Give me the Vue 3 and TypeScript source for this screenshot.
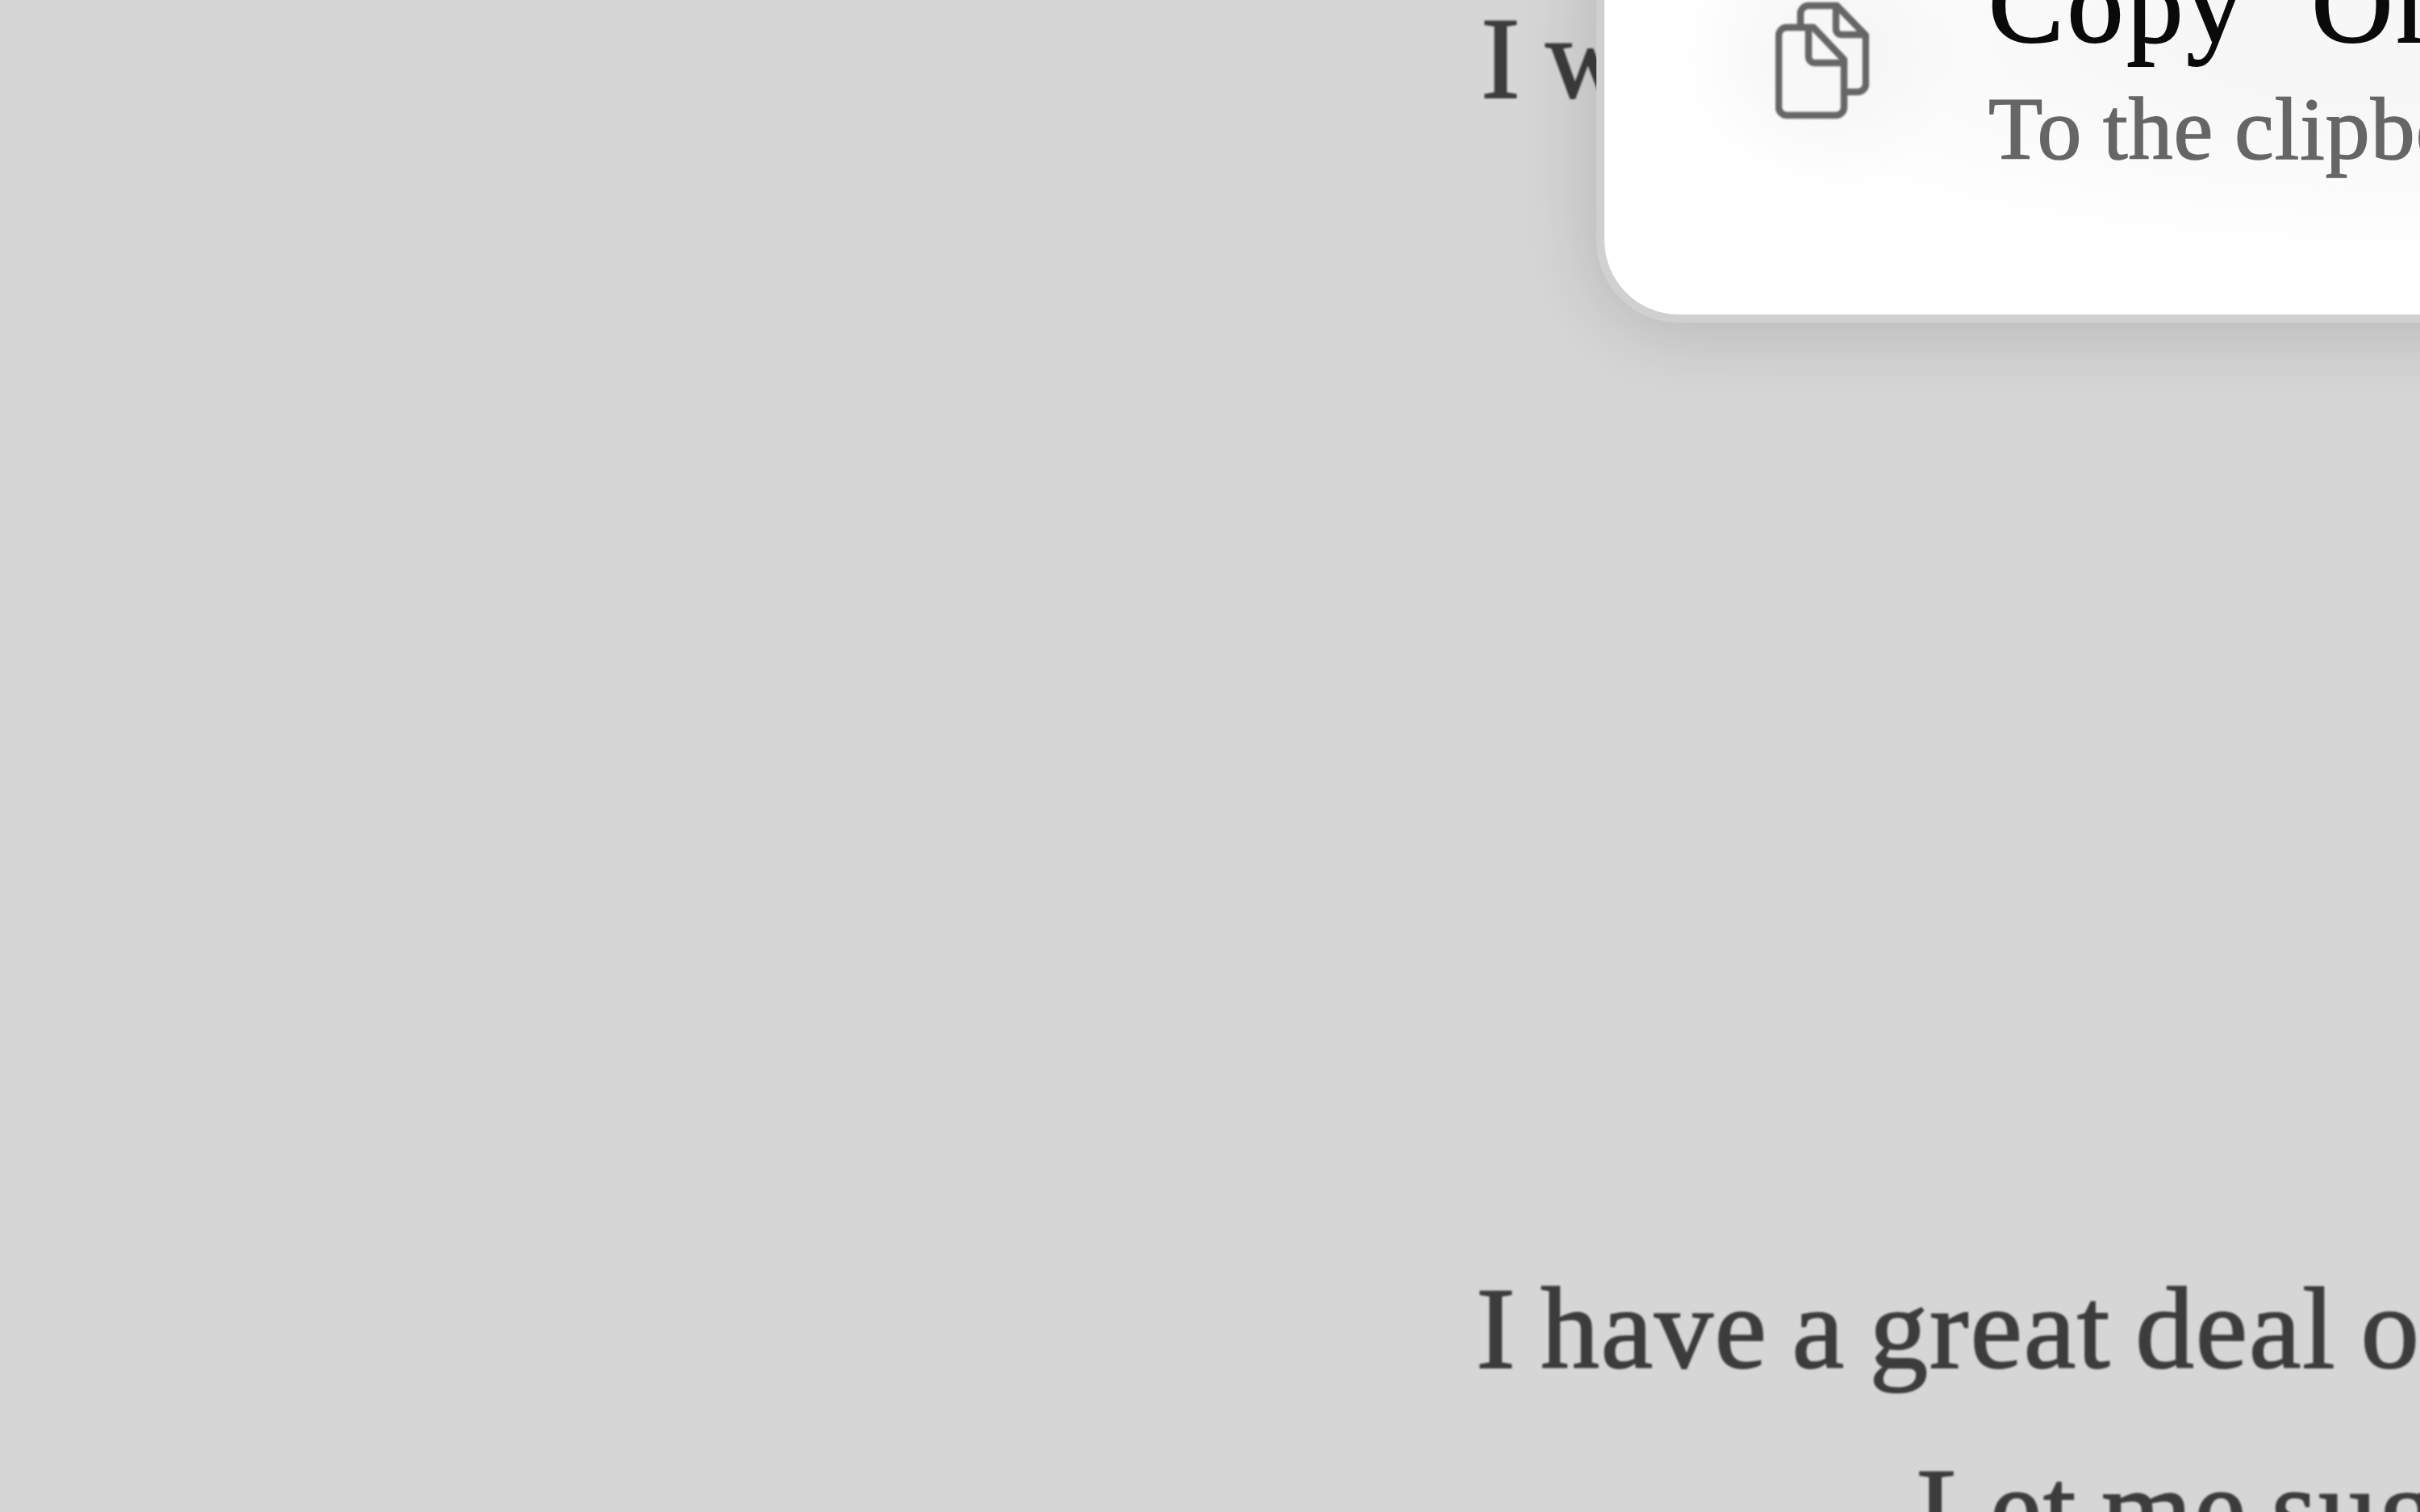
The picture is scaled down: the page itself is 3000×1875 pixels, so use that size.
<script setup lang="ts">
const title = 'Copy “On'
const subtitle = 'To the clipboard'
</script>

<template>
  <div class="page">
    <p class="line first">I was</p>
    <p class="line second">I have a great deal of</p>
    <p class="line third">Let me suggest</p>

    <div class="menu">
      <div class="item">
        <svg class="icon" viewBox="0 0 116 150" fill="none" stroke="#666" stroke-width="8.5" stroke-linejoin="round" stroke-linecap="butt">
          <path d="M31 30V17a10 10 0 0 1 10-10H76L112 44V104a10 10 0 0 1-10 10H89" />
          <path d="M75 7V36a7 7 0 0 0 7 7H112" />
          <path d="M47 34H14a10 10 0 0 0-10 10V133a10 10 0 0 0 10 10H75a10 10 0 0 0 10-10V74Z" />
          <path d="M41 34V70a8 8 0 0 0 8 8H85" />
        </svg>
        <div class="labels">
          <div class="title">{{ title }}</div>
          <div class="subtitle">{{ subtitle }}</div>
        </div>
      </div>
    </div>
  </div>
</template>

<style scoped>
.page {
  position: relative;
  width: 3000px;
  height: 1875px;
  overflow: hidden;
  background: #d6d6d6;
  font-family: "Liberation Serif", serif;
}
.line {
  margin: 0;
  font-size: 145px;
  line-height: 224px;
  color: #3c3c3c;
  white-space: nowrap;
  letter-spacing: 2px;
  word-spacing: -8.5px;
  -webkit-text-stroke: 2px #3c3c3c;
  filter: blur(0.8px);
}
.first {
  margin-top: -40px;
  padding-left: 1836px;
}
.second {
  margin-top: 1351px;
  padding-left: 1830px;
}
.third {
  padding-left: 2376px;
}
.menu {
  position: absolute;
  left: 1989px;
  top: -120px;
  width: 1300px;
  height: 510px;
  box-sizing: border-box;
  padding: 52px 0 0 212px;
  border-radius: 92px;
  background:
    radial-gradient(ellipse 1000px 280px at 1000px 170px, rgba(0, 0, 0, 0.03) 30%, rgba(0, 0, 0, 0) 100%),
    radial-gradient(circle 170px at 271px 190px, rgba(0, 0, 0, 0.02) 40%, rgba(0, 0, 0, 0) 100%),
    #fff;
  box-shadow: 0 0 0 9px #d0d0d0, 0 0 0 10px #d2d2d2, 0 8px 100px 9px rgba(0, 0, 0, 0.17);
}
.item {
  display: flex;
  align-items: flex-start;
  gap: 148px;
}
.icon {
  flex: none;
  width: 116px;
  height: 150px;
  margin-top: 68px;
  filter: blur(0.8px);
}
.labels {
  white-space: nowrap;
  filter: blur(0.7px);
}
.title {
  font-size: 140px;
  line-height: 145px;
  color: #0a0a0a;
  letter-spacing: 4px;
  word-spacing: -24px;
  -webkit-text-stroke: 2px #0a0a0a;
}
.subtitle {
  margin-top: 11px;
  font-size: 110px;
  line-height: 145px;
  color: #666;
  letter-spacing: 1px;
  word-spacing: -3px;
  -webkit-text-stroke: 1.5px #666;
}
</style>
